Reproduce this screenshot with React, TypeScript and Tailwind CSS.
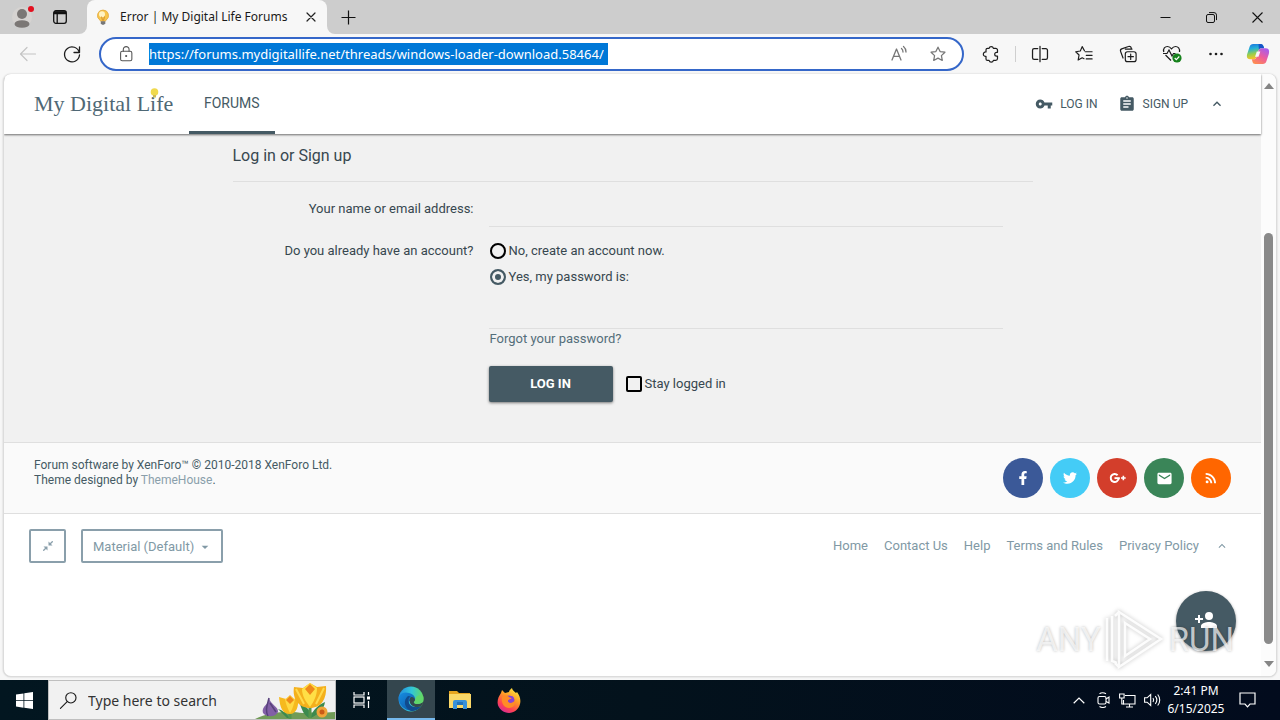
import type { ReactNode } from "react";
import { MdVpnKey, MdAssignment, MdExpandLess, MdEmail, MdRssFeed, MdArrowDropDown } from "react-icons/md";
import { FaFacebookF, FaTwitter } from "react-icons/fa";

function Line({ size = 20, w = 1.2, children }: { size?: number; w?: number; children: ReactNode }) {
  return (
    <svg width={size} height={size} viewBox="0 0 20 20" fill="none" stroke="currentColor" strokeWidth={w} strokeLinecap="round" strokeLinejoin="round" aria-hidden="true">
      {children}
    </svg>
  );
}

const STAR = "M10 2.4l2.35 4.9 5.35.75-3.9 3.75.95 5.35L10 14.6l-4.75 2.55.95-5.35-3.9-3.75 5.35-.75z";

function CopilotIcon() {
  return (
    <svg width="24" height="22" viewBox="0 0 24 22" aria-hidden="true">
      <defs>
        <linearGradient id="cpA" x1="0" y1="0" x2="0.2" y2="1">
          <stop offset="0" stopColor="#1b6fe0" />
          <stop offset="0.35" stopColor="#23b0d8" />
          <stop offset="0.7" stopColor="#9bcf4a" />
          <stop offset="1" stopColor="#f5c22b" />
        </linearGradient>
        <linearGradient id="cpB" x1="0.8" y1="0" x2="0.2" y2="1">
          <stop offset="0" stopColor="#a45cf0" />
          <stop offset="0.5" stopColor="#ee5c9c" />
          <stop offset="1" stopColor="#ff8f4e" />
        </linearGradient>
      </defs>
      <path fill="url(#cpA)" d="M7.2 1h7.6c1.5 0 2.3 1 2.7 2.3l.6 2h-2.7c-1.7 0-2.5.9-3 2.4l-2 6.2c-.5 1.500-1.200 2.300-2.900 2.300H4C1 16.200.4 13.800 1.200 11L3.600 3.800C4.200 2 5.300 1 7.200 1z" />
      <path fill="#1655c8" d="M12.500 1h2.300c1.500 0 2.300 1 2.700 2.300l.6 2h-2.700c-1.200 0-2 .5-2.500 1.400z" />
      <path fill="url(#cpB)" d="M16.800 21H9.200c-1.500 0-2.300-1-2.700-2.300l-.7-2.500h1.700c1.700 0 2.500-.8 3-2.300l2-6.200c.500-1.500 1.300-2.400 3-2.400H20c3 0 3.600 2.900 2.800 5.700l-2.400 7.200C19.800 20 18.700 21 16.800 21z" />
      <path fill="#f7f7f7" d="M10.800 8.500h3.500l-1.800 5.300H9z" />
    </svg>
  );
}

function TitleBar() {
  return (
    <div className="flex h-[34px] bg-[#f7f7f7]">
      <div className="flex w-[87px] shrink-0 items-center rounded-br-lg bg-[#cdcdcd] pl-[12px]">
        <button aria-label="Profile" className="mr-[18px]">
          <svg width="22" height="24" viewBox="0 0 22 24" aria-hidden="true">
            <circle cx="10" cy="12" r="10" fill="#d6d3d1" />
            <circle cx="10" cy="9" r="5" fill="#7b7775" />
            <ellipse cx="10" cy="19" rx="7.500" ry="3.800" fill="#7b7775" />
            <circle cx="19" cy="4" r="3" fill="#e3101f" />
          </svg>
        </button>
        <button aria-label="Tab actions">
          <svg width="16" height="16" viewBox="0 0 16 16" fill="none" stroke="#111" strokeWidth="1.300" aria-hidden="true">
            <rect x="1.700" y="1.700" width="12.600" height="12.600" rx="2.200" />
            <path d="M1.700 4.500h12.600M5.200 4.500v9.500" />
            <path d="M2 3.200h12" strokeWidth="2.200" />
          </svg>
        </button>
      </div>
      <div className="w-[240px] shrink-0 bg-[linear-gradient(#cdcdcd_50%,#f7f7f7_50%)]">
        <div className="flex h-full items-center rounded-t-lg bg-[#f7f7f7] pr-2 pl-2">
          <svg width="16" height="16" viewBox="0 0 16 16" aria-hidden="true">
            <path d="M8 1a5.500 5.500 0 0 0-3.200 10l.8 1.200h4.800l.8-1.200A5.500 5.500 0 0 0 8 1z" fill="#f8c64c" stroke="#dda23a" strokeWidth=".7" />
            <circle cx="7" cy="5.200" r="3" fill="#fff3c4" />
            <path d="M6.500 7.500l1 4M9.500 7.500l-1 4" stroke="#c47b20" strokeWidth=".7" />
            <path d="M5.800 12.200h4.500v2L9 15.700H7l-1.200-1.500z" fill="#777" />
          </svg>
          <span className="ml-[9px] flex-1 font-['Noto_Sans',sans-serif] text-[12px] whitespace-nowrap text-[#1a1a1a]">Error | My Digital Life Forums</span>
          <button aria-label="Close tab" className="flex size-4 items-center justify-center text-[#222]">
            <Line size={16} w={1.500}><path d="M5 5l10 10M15 5L5 15" /></Line>
          </button>
        </div>
      </div>
      <div className="flex flex-1 items-center rounded-bl-lg bg-[#cdcdcd] pl-[14px] text-black">
        <button aria-label="New tab">
          <svg width="15" height="15" viewBox="0 0 15 15" stroke="#111" strokeWidth="1.200" aria-hidden="true"><path d="M7.500 .5v14M.5 7.500h14" /></svg>
        </button>
        <div className="ml-auto flex h-full">
          <button aria-label="Minimize" className="flex w-[46px] items-center justify-center">
            <svg width="11" height="11" viewBox="0 0 11 11" stroke="#111" aria-hidden="true"><path d="M.5 5.500h10" /></svg>
          </button>
          <button aria-label="Restore" className="flex w-[46px] items-center justify-center">
            <svg width="11" height="11" viewBox="0 0 11 11" stroke="#111" fill="none" aria-hidden="true"><rect x=".5" y="2.500" width="8" height="8" rx="1.500" /><path d="M3 .6h5a2.500 2.500 0 0 1 2.500 2.500v5" /></svg>
          </button>
          <button aria-label="Close" className="flex w-[46px] items-center justify-center">
            <svg width="11" height="11" viewBox="0 0 11 11" stroke="#111" strokeWidth="1.100" aria-hidden="true"><path d="M.5.5l10 10M10.500.5l-10 10" /></svg>
          </button>
        </div>
      </div>
    </div>
  );
}

function Toolbar() {
  const slot = "flex w-[44px] items-center justify-center text-[#1c1c1c]";
  return (
    <div className="flex h-10 items-center bg-[#f7f7f7]">
      <button aria-label="Back" className="ml-[6px] flex w-[44px] justify-center text-[#c4c4c4]">
        <Line><path d="M17.500 10h-15M9 3.500L2.500 10 9 16.500" /></Line>
      </button>
      <button aria-label="Refresh" className="flex w-[44px] justify-center text-[#1c1c1c]">
        <Line w={1.300}><path d="M17.300 8.500A7.500 7.500 0 1 0 17.500 11M17.500 3v5.500H12" /></Line>
      </button>
      <div className="ml-[5px] flex h-[34px] flex-1 items-center rounded-full border-2 border-[#3567c9] bg-white pr-[15px] pl-[16px]">
        <span className="mr-[14px] text-[#555]">
          <Line size={18} w={1.200}><rect x="4" y="7" width="12.500" height="10.500" rx="1.800" /><path d="M7 7V5a3.200 3.200 0 0 1 6.400 0v2" /><circle cx="10.200" cy="12.200" r=".6" fill="currentColor" /></Line>
        </span>
        <input
          aria-label="Address"
          className="field-sizing-content h-[22px] bg-[#0078d7] pr-1 font-['Noto_Sans',sans-serif] text-[13px] text-white outline-none"
          defaultValue="https://forums.mydigitallife.net/threads/windows-loader-download.58464/"
        />
        <button aria-label="Read aloud" className="mr-[20px] ml-auto text-[#777]">
          <Line w={1.300}><path d="M3 16L7.500 5 12 16M4.500 12.300h6M12.500 4.500c1 .8 1.500 2 1.500 3.500M14.500 2.500c1.600 1.300 2.500 3.200 2.500 5.500" /></Line>
        </button>
        <button aria-label="Add to favorites" className="text-[#777]">
          <Line size={18} w={1.400}><path d={STAR} /></Line>
        </button>
      </div>
      <button aria-label="Extensions" className={`${slot} ml-[5px]`}>
        <Line w={1.200}><path d="M6.500 4.300h1.600a2.200 2.200 0 0 1 4.300 0h2.300a1.800 1.800 0 0 1 1.800 1.800v2.200h-.9a1.900 1.900 0 0 0 0 3.800h.9v2.500a1.800 1.800 0 0 1-1.800 1.800h-2.300a2.200 2.200 0 0 1-4.300 0H6.500a1.500 1.500 0 0 1-1.500-1.500v-2.600a2.200 2.200 0 1 1 0-4.300V5.800a1.500 1.500 0 0 1 1.500-1.500z" /></Line>
      </button>
      <span className="ml-[2px] h-4 w-px bg-[#cfcfcf]" />
      <button aria-label="Split screen" className={`${slot} ml-[2px]`}>
        <Line size={18} w={1.400}><path d="M10 1.500v17M7.500 4H3.500A1.800 1.800 0 0 0 1.700 5.800v8.400A1.800 1.800 0 0 0 3.500 16h4M12.500 4h4a1.800 1.800 0 0 1 1.800 1.800v8.400a1.800 1.800 0 0 1-1.800 1.800h-4" /></Line>
      </button>
      <button aria-label="Favorites" className={slot}>
        <Line size={18} w={1.300}><path d="M10.500 6.500L8 1.800 5.900 6.700.8 7.500l3.700 3.600-1 5.600L8 14.200l2 1M11.500 7.500H19M12.500 11.500H19M12.500 15.500H19" /></Line>
      </button>
      <button aria-label="Collections" className={slot}>
        <Line size={18} w={1.300}><rect x="7" y="7.500" width="12" height="11" rx="2.500" /><path d="M13 10v6M10 13h6M4.500 14.500L1.800 7.200A2.300 2.300 0 0 1 3 4.300l7.500-2.600a2.300 2.300 0 0 1 3 1.400l.4 1.400M7 4.500h7.500" /></Line>
      </button>
      <button aria-label="Browser essentials" className={slot}>
        <svg width="20" height="20" viewBox="0 0 20 20" fill="none" stroke="#1c1c1c" strokeWidth="1.200" aria-hidden="true">
          <path d="M1.800 8C.8 4.500 3 2.500 5.500 2.500c2 0 3 1 4 2.300 1-1.300 2-2.300 4-2.300 2.500 0 4.500 2 4 5.500M3.500 11l5.500 5.500M1 9.500h4l2-3.500 3 6 1.500-2.500h2" />
          <circle cx="15" cy="14" r="4.600" fill="#16821c" stroke="none" />
          <path d="M12.700 14l1.600 1.700 3-3.200" stroke="#fff" strokeWidth="1.100" />
        </svg>
      </button>
      <button aria-label="Settings and more" className={slot}>
        <svg width="16" height="4" viewBox="0 0 16 4" aria-hidden="true"><g fill="#1c1c1c"><circle cx="2.500" cy="2" r="1.300" /><circle cx="8" cy="2" r="1.300" /><circle cx="13.500" cy="2" r="1.300" /></g></svg>
      </button>
      <button aria-label="Copilot" className="mr-[10px] ml-[8px]"><CopilotIcon /></button>
    </div>
  );
}

function SiteHeader() {
  return (
    <header className="relative flex h-[60px] items-center bg-white pl-[30px] shadow-[0_1px_2px_rgba(0,0,0,0.55)]">
      <a href="#home" className="relative w-[155px] font-['Liberation_Serif',serif] text-[22px] leading-[30px] whitespace-nowrap text-[#4f6875]">
        My Digital Life
        <svg className="absolute -top-px left-[116px]" width="9" height="10" viewBox="0 0 9 10" aria-hidden="true">
          <circle cx="4.500" cy="4" r="3.800" fill="#f0d94e" /><path d="M3 7h3v2.500H3z" fill="#cdbb59" />
        </svg>
      </a>
      <nav className="h-full">
        <a href="#forums" className="flex h-full items-center border-b-[3px] border-[#455a64] px-[15px] pt-[2px] text-[14px] text-[#455a64]">FORUMS</a>
      </nav>
      <div className="mr-[36px] ml-auto flex items-center text-[12px] text-[#455a64]">
        <a href="#login" className="mr-[20px] flex items-center gap-[7px]"><MdVpnKey size={18} />LOG IN</a>
        <a href="#signup" className="mr-[21px] flex items-center gap-[7px]"><MdAssignment size={18} />SIGN UP</a>
        <button aria-label="Collapse header"><MdExpandLess size={16} /></button>
      </div>
    </header>
  );
}

function LoginForm() {
  const label = "w-[241px] shrink-0 text-right";
  const radio = "size-4 appearance-none rounded-full border-2 border-black checked:border-[#455a64] checked:bg-[#455a64] checked:shadow-[inset_0_0_0_3px_#f1f1f1]";
  return (
    <main className="bg-[#f1f1f1] pb-10 text-[13px] leading-[18px] text-[#37474f]">
      <form className="mx-auto max-w-[800px]" onSubmit={(e) => e.preventDefault()}>
        <h1 className="border-b border-[#dfdfdf] pt-[10px] pb-[14px] text-[16px] leading-[23px]">Log in or Sign up</h1>
        <div className="mt-2 flex items-start gap-[15px] pr-[30px]">
          <label htmlFor="login-name" className={`${label} pt-[10px]`}>Your name or email address:</label>
          <input id="login-name" className="h-[37px] min-w-0 flex-1 border-b border-[#dfdfdf] outline-none" />
        </div>
        <div className="mt-[15px] flex gap-[15px] pr-[30px]">
          <div className={label} id="account-question">Do you already have an account?</div>
          <div className="min-w-0 flex-1" role="radiogroup" aria-labelledby="account-question">
            <label className="flex items-center gap-[3px] pl-px"><input type="radio" name="account" className={radio} />No, create an account now.</label>
            <label className="mt-2 flex items-center gap-[3px] pl-px"><input type="radio" name="account" defaultChecked className={radio} />Yes, my password is:</label>
            <input type="password" aria-label="Password" className="mt-[7px] block h-[36px] w-full border-b border-[#dfdfdf] outline-none" />
            <a href="#lost-password" className="mt-px ml-px block text-[#546e7a]">Forgot your password?</a>
            <div className="mt-[18px] flex items-center gap-[13px]">
              <button type="submit" className="h-9 w-[124px] rounded-[2px] bg-[#455a64] font-bold text-white shadow-[0_1px_3px_rgba(0,0,0,0.5)]">LOG IN</button>
              <label className="flex items-center gap-[3px]"><input type="checkbox" className="size-4 appearance-none rounded-[2px] border-2 border-black" />Stay logged in</label>
            </div>
          </div>
        </div>
      </form>
    </main>
  );
}

function GooglePlus() {
  return (
    <svg width="17" height="12" viewBox="0 0 17 12" aria-hidden="true">
      <path d="M8.600 3.200A4 4 0 1 0 9.700 6.200" fill="none" stroke="#fff" strokeWidth="2" />
      <path d="M5.500 5.200h5.300v1.900H5.500z" fill="#fff" />
      <path d="M12 6h4.700M14.350 3.650v4.700" stroke="#fff" strokeWidth="1.600" />
    </svg>
  );
}

function SiteFooter() {
  const round = "flex size-10 items-center justify-center rounded-full text-white";
  const links = ["Home", "Contact Us", "Help", "Terms and Rules", "Privacy Policy"];
  return (
    <footer className="bg-white">
      <div className="flex justify-between border-y border-[#dfdfdf] bg-[#fafafa] py-[15px] pr-[30px] pl-[30px]">
        <p className="text-[12px] leading-[15px] text-[#455a64]">
          Forum software by XenForo™ © 2010-2018 XenForo Ltd.<br />
          Theme designed by <a href="#themehouse" className="text-[#8a9fab]">ThemeHouse</a>.
        </p>
        <div className="flex gap-[7px]">
          <a href="#facebook" aria-label="Facebook" className={`${round} bg-[#3b5998]`}><FaFacebookF size={14} /></a>
          <a href="#twitter" aria-label="Twitter" className={`${round} bg-[#44ccf6]`}><FaTwitter size={14} /></a>
          <a href="#googleplus" aria-label="Google Plus" className={`${round} bg-[#d33e2b]`}><GooglePlus /></a>
          <a href="#contact" aria-label="Email" className={`${round} bg-[#3a8558]`}><MdEmail size={17} /></a>
          <a href="#rss" aria-label="RSS" className={`${round} bg-[#ff6600]`}><MdRssFeed size={16} /></a>
        </div>
      </div>
      <div className="flex items-center pt-[15px] pr-[32px] pl-[25px] text-[13px] text-[#8199a5]">
        <button aria-label="Toggle width" className="mr-[15px] flex h-[34px] w-[37px] items-center justify-center rounded-[2px] border-2 border-[#8a9fab]">
          <svg width="10" height="10" viewBox="0 0 10 10" fill="#8a9fab" stroke="#8a9fab" aria-hidden="true">
            <path d="M5.500.5v4h4zM.5 5.500h4v4z" stroke="none" /><path d="M6.500 3.500L9.700.3M3.500 6.500L.3 9.700" strokeWidth="1.300" />
          </svg>
        </button>
        <button className="flex h-[34px] w-[142px] items-center rounded-[2px] border-2 border-[#8a9fab] pt-px pl-[10px] whitespace-nowrap">
          Material (Default)<MdArrowDropDown size={16} className="ml-[3px]" />
        </button>
        <nav className="ml-auto flex items-center gap-4">
          {links.map((l) => <a key={l} href="#footer">{l}</a>)}
          <a href="#top" aria-label="Top"><MdExpandLess size={14} /></a>
        </nav>
      </div>
    </footer>
  );
}

function Watermark() {
  const word = "font-['Roboto',sans-serif] text-[33px] leading-[40px] text-white/70 [text-shadow:0_0_3px_rgba(0,0,0,0.28)]";
  return (
    <div className="pointer-events-none absolute right-[42px] bottom-[4px] flex items-center gap-[4px]">
      <span className={word}>ANY</span>
      <svg width="60" height="64" viewBox="0 0 60 64" fill="none" className="drop-shadow-[0_0_2px_rgba(0,0,0,0.28)]" aria-hidden="true">
        <path d="M2 10v43M7 8v45l5 2M14 4l42 27-42 28V4zM20 15l25 16-25 17zM14 4l-4 4M14 59l-4-4" stroke="#fff" strokeOpacity=".9" strokeWidth="2.500" />
      </svg>
      <span className={word}>RUN</span>
    </div>
  );
}

function PageScrollbar() {
  return (
    <div className="flex w-[15px] shrink-0 flex-col items-center bg-[#fcfcfc] pt-[9px] pb-[9px]" aria-hidden="true">
      <svg width="10" height="6" viewBox="0 0 10 6"><path d="M5 0l5 6H0z" fill="#858585" /></svg>
      <div className="flex-[144]" />
      <div className="w-[9px] flex-[411] rounded-full bg-[#8a8a8a]" />
      <div className="flex-[17]" />
      <svg width="10" height="6" viewBox="0 0 10 6"><path d="M0 0h10L5 6z" fill="#858585" /></svg>
    </div>
  );
}

function Flowers() {
  return (
    <svg width="80" height="38" viewBox="0 0 80 38" className="shrink-0" aria-hidden="true">
      <path d="M0 38c15-8 36-8 48-6 12-1 20 0 32-1v7z" fill="#719b57" />
      <path d="M35 37c-5-6-8-8-12-9l9 9zM56 37c7-4 13-8 14-16-7 3-12 8-14 14-1-7-5-10-11-12 2 7 5 12 9 14z" fill="#3c8a4e" />
      <path d="M35 22v16M55 20v17" stroke="#54954c" strokeWidth="3" />
      <path d="M14 17c0 7-8 8-6 15 4 5 13 4 15-1 1-5-8-8-9-14z" fill="#8260a6" />
      <path d="M14 17c-2 8-4 12-1 18M15 22l6 9" stroke="#57417b" strokeWidth="1.500" fill="none" />
      <path d="M24 16l7 2 4-4 4 4 4-1c1 9-2 16-8 16-8 0-10-7-11-17z" fill="#f6b91e" />
      <path d="M30 18c1 6 3 10 5 14 3-5 4-9 5-14l-5-3z" fill="#ffd943" />
      <path d="M39 6l9 1 7-5 7 4 9-1c1 13-5 22-16 22S37 18 39 6z" fill="#f4b01c" />
      <path d="M47 8c0 7 4 13 8 18 4-6 7-11 7-19l-7-5z" fill="#ffdf46" />
      <path d="M55 3l-5 5 5 6 5-6zM35 15l-4 4 4 4 4-4z" fill="#ef8919" />
      <path d="M41 8l8 15M69 7l-8 16" stroke="#ffd94c" strokeWidth="2" />
      <circle cx="67" cy="31" r="5.500" fill="#efa439" /><circle cx="67" cy="31" r="2.500" fill="#c95a17" />
    </svg>
  );
}

function EdgeLogo() {
  return (
    <svg width="26" height="26" viewBox="0 0 26 26" aria-hidden="true">
      <defs>
        <linearGradient id="edTop" x1="0" y1=".4" x2="1" y2=".5"><stop offset="0" stopColor="#238de0" /><stop offset=".5" stopColor="#31c6d8" /><stop offset="1" stopColor="#67db5a" /></linearGradient>
        <linearGradient id="edLow" x1="0" y1="0" x2="1" y2="1"><stop offset="0" stopColor="#168de2" /><stop offset="1" stopColor="#0c4d99" /></linearGradient>
      </defs>
      <circle cx="13" cy="13" r="12.500" fill="url(#edTop)" />
      <path d="M1 10C4 6 8 6 11 7c5 1 7 5 6 8h-6c-1 5 5 8 12 5A12.500 12.500 0 0 1 1 10z" fill="url(#edLow)" />
      <path d="M10 10c-5 4-4 12 3 15 5 0 8-2 10.500-5C16 23 10 20 10.500 14c0-2 1-3 2.500-3.500z" fill="#114b8d" />
      <path d="M13 11c2-.5 4 1 4 3 0 1-1 2-1.200 2.800 2.500 2.400 8 1 9.500-1.300-1 6-4 5.500-8 5.500-6-1-7-8-4.300-10z" fill="#34494e" />
      <path d="M17 14c0 1-1 2-1.200 2.800 2.500 2.400 8 1 9.300-1.300a12 12 0 0 0 .2-5C22 8 18 9 17 14z" fill="#60d66b" />
    </svg>
  );
}

function FolderIcon() {
  return (
    <svg width="24" height="22" viewBox="0 0 24 22" aria-hidden="true">
      <path d="M1 2h8l2 2h11v4H1z" fill="#e7a51f" />
      <path d="M1 5h22v14H1z" fill="#fbd868" />
      <path d="M5 13a2 2 0 0 1 2-2h10a2 2 0 0 1 2 2v7h-4v-4H9v4H5z" fill="#3991d8" />
      <path d="M9 13h6v3H9z" fill="#2272b9" />
    </svg>
  );
}

function FirefoxIcon() {
  return (
    <svg width="24" height="25" viewBox="0 0 24 25" aria-hidden="true">
      <defs><linearGradient id="ffx" x1=".8" y1="0" x2=".25" y2="1"><stop offset="0" stopColor="#ffec43" /><stop offset=".4" stopColor="#ff9b26" /><stop offset=".75" stopColor="#ff4054" /><stop offset="1" stopColor="#d32b99" /></linearGradient></defs>
      <path d="M4 5l1-3 3 3 4-1c0-2 2-3 3-4 0 2 2 3 4 5l1-1c3 4 4 8 3 12-1 5-6 9-11 9S1 21 .6 15C.4 11 2 8 4 5z" fill="url(#ffx)" />
      <circle cx="12" cy="13" r="5.600" fill="#7546d9" />
      <path d="M5 9c2-2 5-2 7 0l3 1c-1 2-4 1-4 3 1 3 5 2 7-1 1 5-2 8-6 8-5 0-8-5-7-11z" fill="#ff8c26" />
      <path d="M12 9l3 1c-1 2-4 1-4 3 1 2 3 2 5 1 2-2 1-5-1-6z" fill="#8c42d7" />
    </svg>
  );
}

function Taskbar() {
  return (
    <div className="flex h-10 bg-[linear-gradient(90deg,#021620,#03121c_50%,#020b1d)] font-['Noto_Sans',sans-serif] text-white">
      <button aria-label="Start" className="flex w-12 shrink-0 items-center justify-center">
        <svg width="17" height="17" viewBox="0 0 17 17" fill="#fff" aria-hidden="true"><path d="M0 2.500l7.500-1v6.700H0zM8.300 1.300L17 0v8.200H8.300zM0 9h7.500v6.700L0 14.600zM8.300 9H17v8l-8.700-1.200z" /></svg>
      </button>
      <div className="flex w-72 shrink-0 items-end border border-[#bfbfbf] bg-[#f1f1f1] pl-[10px]">
        <div className="flex h-full min-w-0 flex-1 items-center text-[#1b1b1b]">
          <Line size={19}><circle cx="12.500" cy="7.200" r="5.400" /><path d="M8.600 11.100L1.500 18.200" /></Line>
          <input aria-label="Search" placeholder="Type here to search" className="ml-[10px] min-w-0 flex-1 text-[14px] outline-none placeholder:text-[#333]" />
        </div>
        <Flowers />
      </div>
      <button aria-label="Task view" className="flex w-[51px] items-center justify-center">
        <svg width="18" height="16" viewBox="0 0 18 16" fill="none" stroke="#fff" strokeWidth="1.200" aria-hidden="true"><path d="M1 0v3h10V0M1 16v-3h10v3M15.500 0v3M15.500 9v7" /><rect x="1" y="5" width="10" height="6" /><path d="M14 4.500h3v3h-3z" fill="#fff" stroke="none" /></svg>
      </button>
      <button aria-label="Microsoft Edge" className="flex w-12 items-center justify-center border-b-2 border-[#76b9ed] bg-[#34464e]"><EdgeLogo /></button>
      <button aria-label="File Explorer" className="flex w-[50px] items-center justify-center"><FolderIcon /></button>
      <button aria-label="Firefox" className="flex w-12 items-center justify-center"><FirefoxIcon /></button>
      <div className="ml-auto flex items-center">
        <button aria-label="Show hidden icons"><svg width="12" height="7" viewBox="0 0 12 7" fill="none" stroke="#fff" strokeWidth="1.200" aria-hidden="true"><path d="M.7 6.200L6 1l5.300 5.200" /></svg></button>
        <svg className="ml-3" width="13" height="16" viewBox="0 0 13 16" fill="none" stroke="#fff" strokeWidth="1.100" aria-hidden="true"><rect x="1" y="4.500" width="8" height="7.500" rx="1.500" /><path d="M9 7l3-2v6L9 9.500M2.500 1.800C4 .5 7 .5 9 1.800M2.500 14.500c2 1.200 4.500 1.200 6.500 0" /></svg>
        <svg className="ml-[9px]" width="17" height="15" viewBox="0 0 17 15" fill="none" stroke="#fff" strokeWidth="1.100" aria-hidden="true"><path d="M6 2.500h10v8.500H4.500V7M10.500 11v3M7 14h7" /><path d="M.6 1h4.500v4H.6zM2.800 5v6h2" /></svg>
        <svg className="ml-2" width="17" height="14" viewBox="0 0 17 14" fill="none" stroke="#fff" strokeWidth="1.100" aria-hidden="true"><path d="M.6 4.800h2.500l3.600-3.300v11L3.100 9.200H.6zM9 5c.8 1.200.8 2.800 0 4M11.300 3.200c1.800 2.200 1.800 5.400 0 7.600M13.700 1.500c2.700 3.200 2.700 7.800 0 11" /></svg>
        <div className="ml-[6px] w-[58px] text-center text-[12px] leading-[18px] whitespace-nowrap"><div>2:41 PM</div><div>6/15/2025</div></div>
        <button aria-label="Notifications" className="mr-[24px] ml-[14px]"><svg width="17" height="16" viewBox="0 0 17 16" fill="none" stroke="#fff" strokeWidth="1.200" aria-hidden="true"><path d="M1 1h15v11h-5l-2.500 2.800L6 12H1z" /></svg></button>
      </div>
    </div>
  );
}

export default function App() {
  return (
    <div className="flex min-h-screen flex-col bg-[#f7f7f7]">
      <TitleBar />
      <Toolbar />
      <div className="flex flex-1 flex-col px-[3px] pb-[3px]">
        <div className="relative flex flex-1 overflow-hidden rounded-lg border border-t-0 border-[#dcdcdc] bg-white font-['Roboto',sans-serif] shadow-[0_0_2px_rgba(0,0,0,0.2)]">
          <div className="min-w-0 flex-1">
            <SiteHeader />
            <LoginForm />
            <SiteFooter />
          </div>
          <PageScrollbar />
          <button aria-label="Register" className="absolute right-[40px] bottom-[25px] flex size-[60px] items-center justify-center rounded-full bg-[#455a64] shadow-[0_1px_3px_rgba(0,0,0,0.4)]">
            <svg width="24" height="24" viewBox="0 0 24 24" fill="#fff" aria-hidden="true"><path d="M15 11a4 4 0 1 0 0-8 4 4 0 0 0 0 8zM6 9V6H4v3H1v2h3v3h2v-3h3V9zM15 13c-2.700 0-8 1.300-8 4v2h16v-2c0-2.700-5.300-4-8-4z" /></svg>
          </button>
          <Watermark />
        </div>
      </div>
      <Taskbar />
    </div>
  );
}
